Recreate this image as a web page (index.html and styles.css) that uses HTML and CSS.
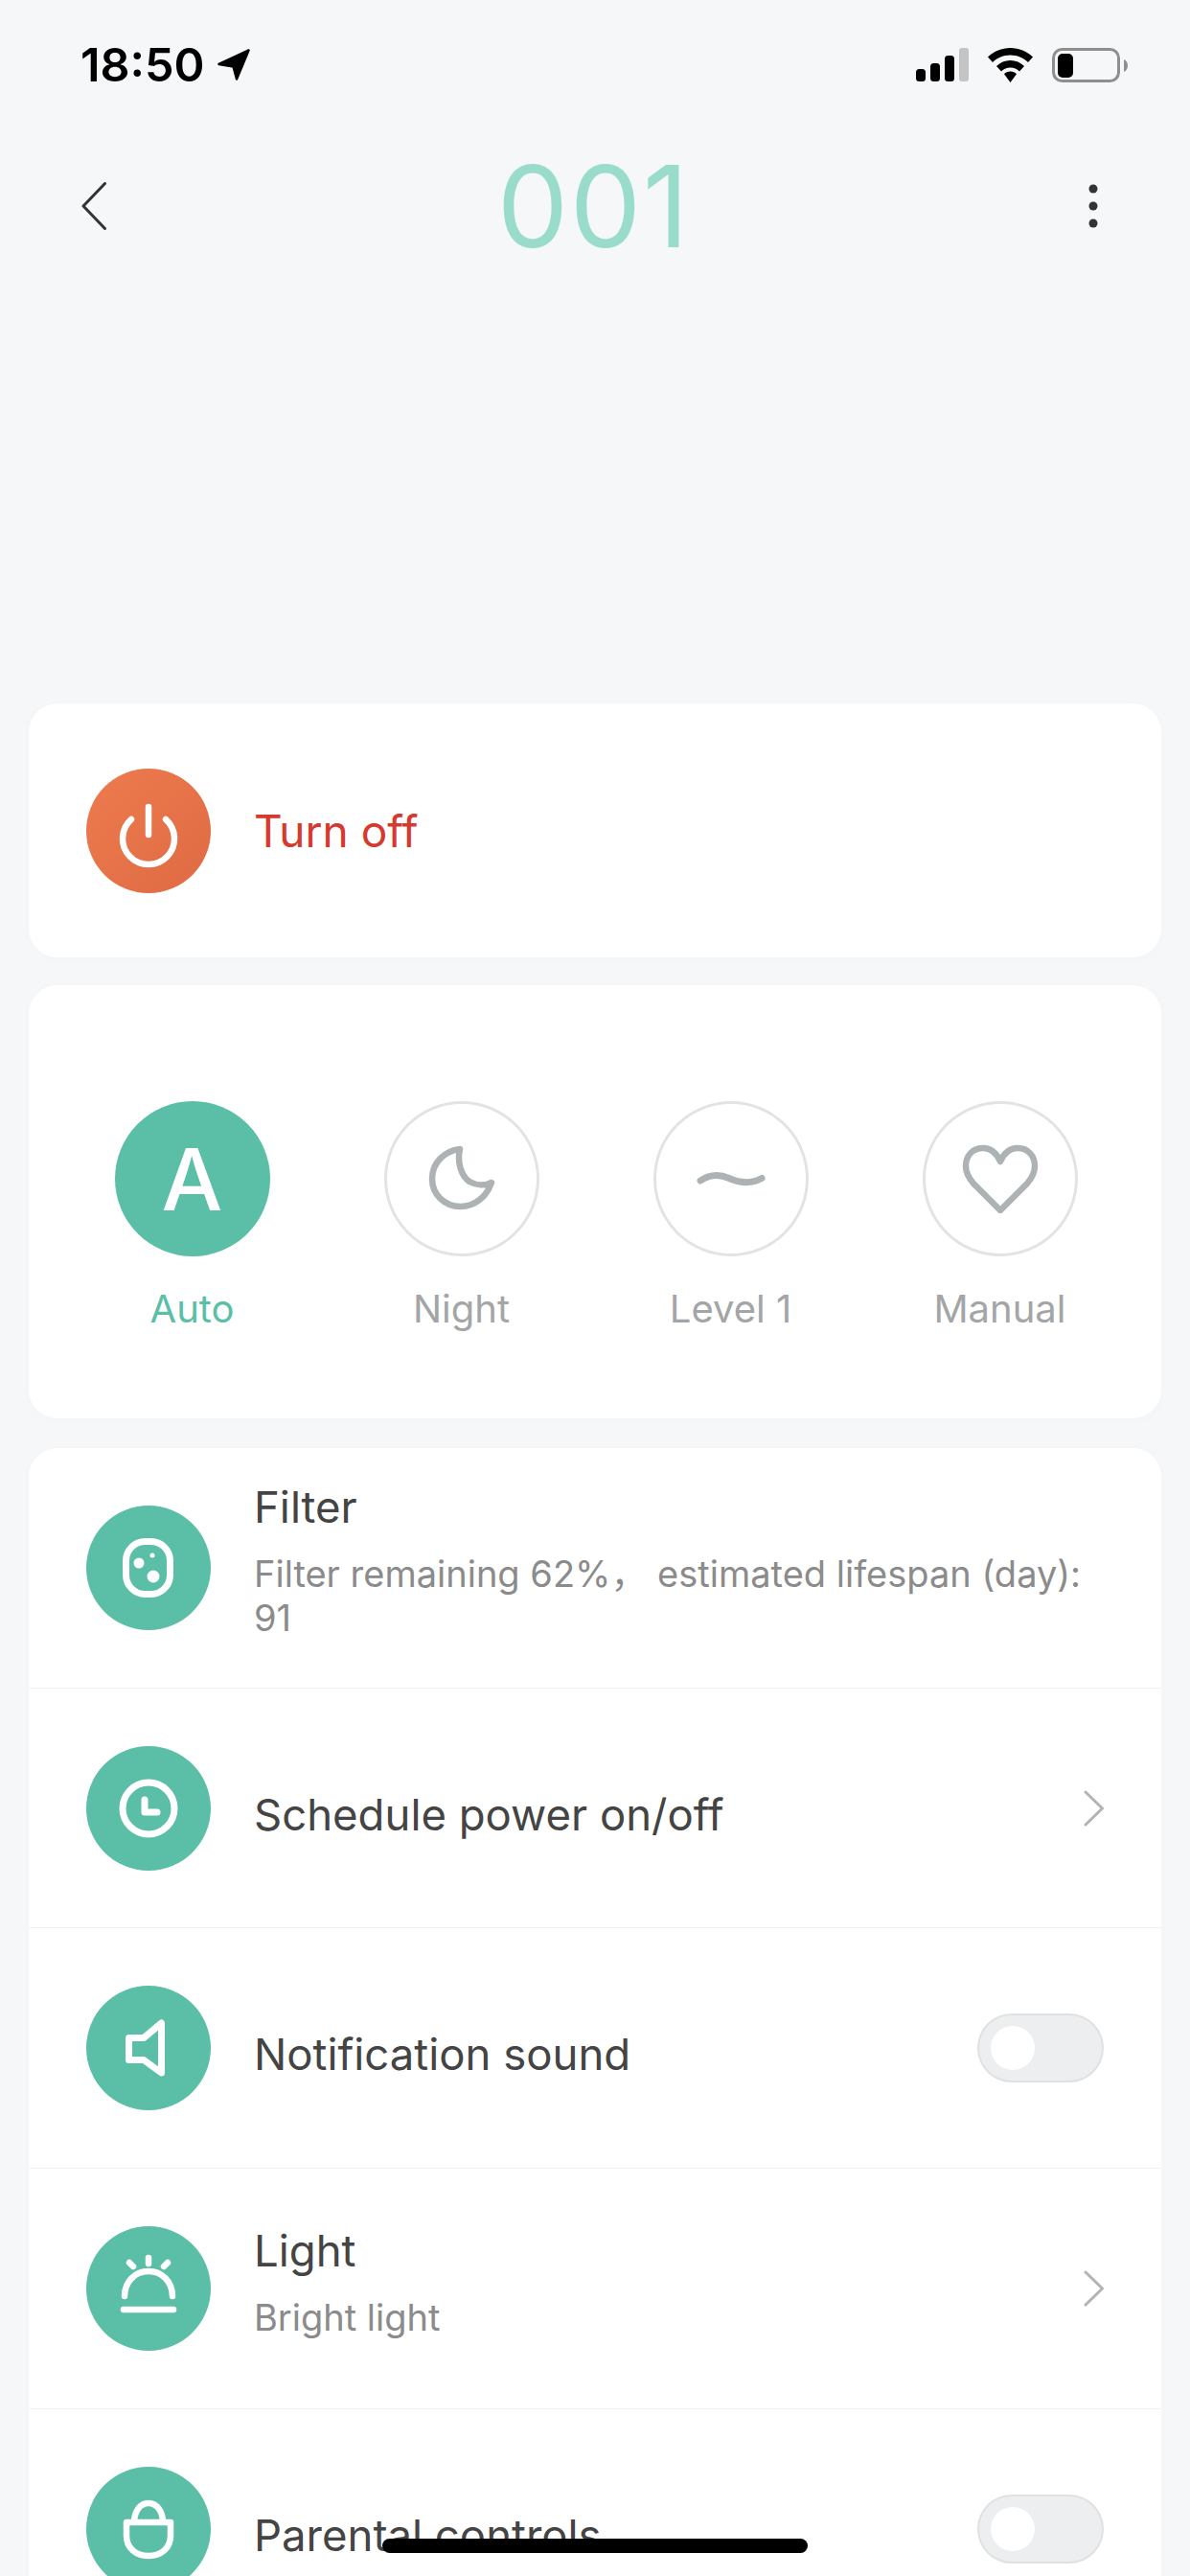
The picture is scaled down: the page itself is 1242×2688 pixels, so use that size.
FILE: index.html
```html
<!DOCTYPE html>
<html lang="en">
<head>
<meta charset="utf-8">
<title>001</title>
<link rel="stylesheet" href="styles.css">
</head>
<body>
<div class="screen">
  <header class="status">
    <div class="status-left">
      <span class="time">18:50</span>
      <svg class="loc" width="34" height="33" viewBox="0 0 34 33"><path d="M32.500 1.500 1.500 16l15 2.500L20 31.500z" fill="#000" stroke="#000" stroke-width="2.500" stroke-linejoin="round"/></svg>
    </div>
    <div class="status-right">
      <svg width="55" height="35" viewBox="0 0 55 35"><rect x="0" y="22" width="10" height="13" rx="3.500" fill="#000"/><rect x="15" y="16" width="10" height="19" rx="3.500" fill="#000"/><rect x="30" y="8" width="10" height="27" rx="3.500" fill="#000"/><rect x="45" y="0" width="10" height="35" rx="3" fill="#c4c4c4"/></svg>
      <svg width="47" height="36" viewBox="0 0 47 36"><path d="M23.500 0C14.500 0 6.500 3.500 0 9.500l5 5.500C10 10.200 16.500 7.500 23.500 7.500S37 10.200 42 15l5-5.500C40.500 3.500 32.500 0 23.500 0zM23.500 13C18 13 13 15 9 19l5 5.500c2.500-2.500 6-4 9.500-4s7 1.500 9.500 4l5-5.500c-4-4-9-6-14.500-6zM23.500 24.500c-2.500 0-4.800 1-6.500 2.800L23.500 36l6.500-8.700c-1.700-1.800-4-2.800-6.500-2.800z" fill="#000"/></svg>
      <svg class="batt" width="80" height="36" viewBox="0 0 80 36"><rect x="1.500" y="1.500" width="68" height="33" rx="9" fill="none" stroke="#8f8f8f" stroke-width="3"/><rect x="6" y="6" width="16" height="25" rx="5" fill="#000"/><path d="M75 12c2.500 1 4 3.500 4 6.500s-1.500 5.500-4 6.500z" fill="#8f8f8f"/></svg>
    </div>
  </header>

  <nav class="nav">
    <svg class="nav-back" width="26" height="50" viewBox="0 0 26 50"><path d="M24.500 1.500 2 25l22.500 23.500" fill="none" stroke="#333" stroke-width="3" stroke-linecap="round" stroke-linejoin="round"/></svg>
    <h1 class="title">001</h1>
    <svg class="nav-more" width="10" height="46" viewBox="0 0 10 46"><circle cx="5" cy="5" r="4.500" fill="#333"/><circle cx="5" cy="23" r="4.500" fill="#333"/><circle cx="5" cy="41" r="4.500" fill="#333"/></svg>
  </nav>

  <main class="cards">
    <section class="card power">
      <span class="ico ico-power">
        <svg width="130" height="130" viewBox="0 0 130 130"><path d="M47 53a27 27 0 1 0 36 0" fill="none" stroke="#fff" stroke-width="6.500" stroke-linecap="round"/><path d="M65 40v29" fill="none" stroke="#fff" stroke-width="6.500" stroke-linecap="round"/></svg>
      </span>
      <span class="power-label">Turn off</span>
    </section>

    <section class="card modes">
      <div class="mode is-on">
        <span class="mode-ico">A</span>
        <span class="mode-label">Auto</span>
      </div>
      <div class="mode">
        <span class="mode-ico">
          <svg width="76" height="76" viewBox="0 0 76 76"><path d="M36 7C20 9 7 21 7 38c0 16.500 13 29 29.500 29C51 67 64 57 69 42 62 45.500 53 45 46 41 37 35 33 20 36 7z" fill="none" stroke="#adb3b5" stroke-width="6.500" stroke-linejoin="round"/></svg>
        </span>
        <span class="mode-label">Night</span>
      </div>
      <div class="mode">
        <span class="mode-ico">
          <svg width="76" height="24" viewBox="0 0 76 24"><path d="M6 14C16 7 26 7 36 11.500S58 18 70 11.500" fill="none" stroke="#adb3b5" stroke-width="7" stroke-linecap="round"/></svg>
        </span>
        <span class="mode-label">Level 1</span>
      </div>
      <div class="mode">
        <span class="mode-ico">
          <svg width="80" height="72" viewBox="0 0 80 72"><path d="M40 18C36 9 30 4 22 4 11 4 4 12 4 23c0 7 3 12 8 18l28 28 28-28c5-6 8-11 8-18C76 12 69 4 58 4 50 4 44 9 40 18z" fill="none" stroke="#adb3b5" stroke-width="6.500" stroke-linejoin="round"/></svg>
        </span>
        <span class="mode-label">Manual</span>
      </div>
    </section>

    <section class="card list">
      <div class="row">
        <span class="ico">
          <svg width="130" height="130" viewBox="0 0 130 130"><rect x="41.500" y="37.500" width="46" height="55" rx="20" fill="none" stroke="#fff" stroke-width="7"/><circle cx="55" cy="60" r="5.500" fill="#fff"/><circle cx="70" cy="74" r="6.500" fill="#fff"/><circle cx="69" cy="52" r="2.500" fill="#fff"/></svg>
        </span>
        <div class="row-text is-long">
          <div class="row-title">Filter</div>
          <div class="row-sub">Filter remaining 62%， estimated lifespan (day): 91</div>
        </div>
      </div>
      <div class="row">
        <span class="ico">
          <svg width="130" height="130" viewBox="0 0 130 130"><circle cx="65" cy="65" r="27" fill="none" stroke="#fff" stroke-width="7"/><path d="M61 56v13h13" fill="none" stroke="#fff" stroke-width="7" stroke-linecap="round" stroke-linejoin="round"/></svg>
        </span>
        <div class="row-text is-single"><div class="row-title">Schedule power on/off</div></div>
        <svg class="chev" width="22" height="38" viewBox="0 0 22 38"><path d="M3 2l17.500 17L3 36" fill="none" stroke="#b3b3b3" stroke-width="3" stroke-linecap="round" stroke-linejoin="round"/></svg>
      </div>
      <div class="row">
        <span class="ico">
          <svg width="130" height="130" viewBox="0 0 130 130"><path d="M78.500 39v52L60 77.500H44.500v-23H60z" fill="none" stroke="#fff" stroke-width="7" stroke-linejoin="round"/></svg>
        </span>
        <div class="row-text is-single"><div class="row-title">Notification sound</div></div>
        <span class="toggle"><span class="knob"></span></span>
      </div>
      <div class="row">
        <span class="ico">
          <svg width="130" height="130" viewBox="0 0 130 130" fill="none" stroke="#fff" stroke-width="6.500" stroke-linecap="round"><path d="M40 73C40 58 51 47 65 47s25 11 25 26"/><path d="M39 87h52"/><path d="M65 33v6"/><path d="M45 38l4 4"/><path d="M85 38l-4 4"/></svg>
        </span>
        <div class="row-text">
          <div class="row-title">Light</div>
          <div class="row-sub">Bright light</div>
        </div>
        <svg class="chev" width="22" height="38" viewBox="0 0 22 38"><path d="M3 2l17.500 17L3 36" fill="none" stroke="#b3b3b3" stroke-width="3" stroke-linecap="round" stroke-linejoin="round"/></svg>
      </div>
      <div class="row">
        <span class="ico">
          <svg width="130" height="130" viewBox="0 0 130 130" fill="none" stroke="#fff" stroke-width="6.500" stroke-linejoin="round"><path d="M42 58h46v14c0 13-10 21-23 21S42 85 42 72z"/><path d="M50 58c0-11 6-20 15-20s15 9 15 20"/></svg>
        </span>
        <div class="row-text is-single"><div class="row-title">Parental controls</div></div>
        <span class="toggle"><span class="knob"></span></span>
      </div>
    </section>
  </main>
  <div class="home-bar"></div>
</div>
</body>
</html>
```
FILE: styles.css
```css
* { box-sizing: border-box; }
html, body { margin: 0; padding: 0; }
body {
  width: 1242px;
  height: 2688px;
  overflow: hidden;
  background: #f6f7f9;
  font-family: Inter, "Noto Sans CJK SC", sans-serif;
}
.screen { position: relative; width: 1242px; height: 2688px; overflow: hidden; }

.status {
  height: 49px;
  margin-top: 43px;
  padding: 0 64px 0 84px;
  display: flex;
  justify-content: space-between;
  align-items: center;
}
.status-left { display: flex; align-items: center; gap: 13px; }
.time { font-family: Inter, sans-serif; font-size: 48.500px; font-weight: 600; color: #000; line-height: 36px; }
.status-right { display: flex; align-items: center; gap: 20px; }

.nav {
  margin-top: 73px;
  height: 100px;
  padding: 0 96px 0 85px;
  display: flex;
  justify-content: space-between;
  align-items: center;
}
.title {
  margin: 0 8px 0 0;
  font-size: 118px;
  font-weight: 400;
  letter-spacing: 1.500px;
  color: #9adccb;
  line-height: 100px;
  font-family: Inter, sans-serif;
}

.cards { margin-top: 469px; padding: 0 30px; display: flex; flex-direction: column; }
.card { background: #fff; border-radius: 30px; box-shadow: 0 2px 14px rgba(0, 0, 0, 0.015); }

.power { height: 265px; padding-left: 60px; display: flex; align-items: center; gap: 45px; }
.ico {
  flex: none;
  width: 130px;
  height: 130px;
  border-radius: 50%;
  background: #5bbfa7;
  display: flex;
}
.ico-power { background: linear-gradient(135deg, #ee7b4e, #df6a44); }
.power-label { font-size: 46px; color: #d6392d; }

.modes {
  margin-top: 29px;
  height: 452px;
  padding: 121px 0 0 30px;
  display: grid;
  grid-template-columns: repeat(4, 281px);
  align-items: start;
}
.mode { display: flex; flex-direction: column; align-items: center; gap: 31px; }
.mode-ico {
  width: 162px;
  height: 162px;
  border-radius: 50%;
  border: 3px solid #e2e4e4;
  display: flex;
  align-items: center;
  justify-content: center;
}
.mode.is-on .mode-ico { background: #5bbfa7; border: 0; color: #fff; font-size: 90px; font-weight: 500; }
.mode-label { font-size: 40px; line-height: 48px; color: #a3a5a6; }
.mode.is-on .mode-label { color: #5bbfa7; }

.list { margin-top: 31px; height: 1300px; }
.row {
  height: 250.700px;
  padding: 0 60px;
  display: flex;
  align-items: center;
  gap: 45px;
  border-bottom: 1px solid #f1f1f1;
}
.row-text { flex: 1; min-width: 0; padding-bottom: 14px; }
.row-text.is-long { padding-bottom: 15px; }
.row-text.is-single { padding: 14px 0 0; }
.row-title { font-size: 45.500px; line-height: 56px; color: #444; }
.row-sub { font-size: 38px; line-height: 46px; color: #8b8b8b; margin-top: 18px; }
.chev { flex: none; }
.toggle {
  flex: none;
  width: 132px;
  height: 72px;
  border-radius: 36px;
  background: #edeef0;
  border: 2px solid #e0e1e1;
  padding: 11px 12px;
  display: flex;
}
.knob { width: 46px; height: 46px; border-radius: 50%; background: #fff; }

.home-bar {
  position: absolute;
  left: 399px;
  top: 2649px;
  width: 444px;
  height: 15px;
  border-radius: 8px;
  background: #000;
}
```
